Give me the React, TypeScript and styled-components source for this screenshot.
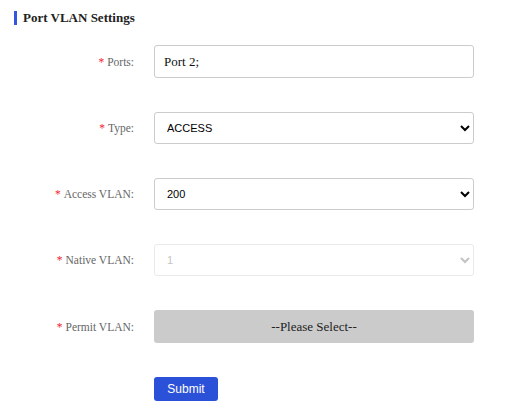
import React from "react";
import styled, { createGlobalStyle } from "styled-components";

const Global = createGlobalStyle`
  html, body { margin: 0; padding: 0; background: #fff; }
  body { font-family: "Liberation Serif", "Times New Roman", serif; }
`;

const Page = styled.div`
  width: 506px;
  height: 410px;
  box-sizing: border-box;
  padding: 11px 0 0 14px;
  background: #fff;
`;

const Title = styled.h2`
  display: flex;
  align-items: center;
  gap: 6px;
  margin: 0;
  height: 14px;
  font-family: "Liberation Serif", serif;
  font-size: 13px;
  font-weight: bold;
  color: #222;
  &::before {
    content: "";
    display: block;
    width: 3px;
    height: 14px;
    background: #3556dd;
  }
`;

const Form = styled.form`
  display: flex;
  flex-direction: column;
  gap: 34px;
  margin-top: 20px;
`;

const Row = styled.div<{ $h: number }>`
  display: grid;
  grid-template-columns: 120px 320px;
  column-gap: 20px;
  align-items: center;
  height: ${(p) => p.$h}px;
`;

const Label = styled.label`
  text-align: right;
  font-family: "Liberation Serif", serif;
  font-size: 11.5px;
  color: #666;
  white-space: nowrap;
`;

const Star = styled.span`
  color: #f5222d;
  margin-right: 3px;
`;

const TextInput = styled.input`
  box-sizing: border-box;
  width: 320px;
  height: 33px;
  padding: 0 9px;
  border: 1px solid #ccc;
  border-radius: 3px;
  font-family: "Liberation Serif", serif;
  font-size: 13px;
  color: #111;
  outline: none;
`;

const Select = styled.select`
  box-sizing: border-box;
  width: 320px;
  height: 32px;
  padding: 0 6px 0 8px;
  border: 1px solid #ccc;
  border-radius: 3px;
  background: #fff;
  font-family: "Liberation Sans", Arial, sans-serif;
  font-size: 11px;
  color: #000;
  outline: none;
  &:disabled {
    border-color: #e2e2e2;
    color: #aaa;
    background: #fff;
  }
`;

const PickBox = styled.div`
  box-sizing: border-box;
  width: 320px;
  height: 33px;
  display: flex;
  align-items: center;
  justify-content: center;
  background: #cbcbcb;
  border-radius: 3px;
  font-family: "Liberation Serif", serif;
  font-size: 13px;
  color: #222;
`;

const Submit = styled.button`
  grid-column: 2;
  justify-self: start;
  width: 64px;
  height: 24px;
  border: none;
  border-radius: 3px;
  background: #2c51d9;
  color: #fff;
  font-family: "Liberation Sans", Arial, sans-serif;
  font-size: 12px;
  padding: 0;
`;

export default function App() {
  return (
    <Page>
      <Global />
      <Title>Port VLAN Settings</Title>
      <Form onSubmit={(e) => e.preventDefault()}>
        <Row $h={33}>
          <Label><Star>*</Star>Ports:</Label>
          <TextInput defaultValue="Port 2;" />
        </Row>
        <Row $h={32}>
          <Label><Star>*</Star>Type:</Label>
          <Select defaultValue="ACCESS">
            <option>ACCESS</option>
            <option>TRUNK</option>
          </Select>
        </Row>
        <Row $h={32}>
          <Label><Star>*</Star>Access VLAN:</Label>
          <Select defaultValue="200">
            <option>1</option>
            <option>200</option>
          </Select>
        </Row>
        <Row $h={32}>
          <Label><Star>*</Star>Native VLAN:</Label>
          <Select defaultValue="1" disabled>
            <option>1</option>
          </Select>
        </Row>
        <Row $h={33}>
          <Label><Star>*</Star>Permit VLAN:</Label>
          <PickBox>--Please Select--</PickBox>
        </Row>
        <Row $h={24}>
          <Submit type="submit">Submit</Submit>
        </Row>
      </Form>
    </Page>
  );
}
